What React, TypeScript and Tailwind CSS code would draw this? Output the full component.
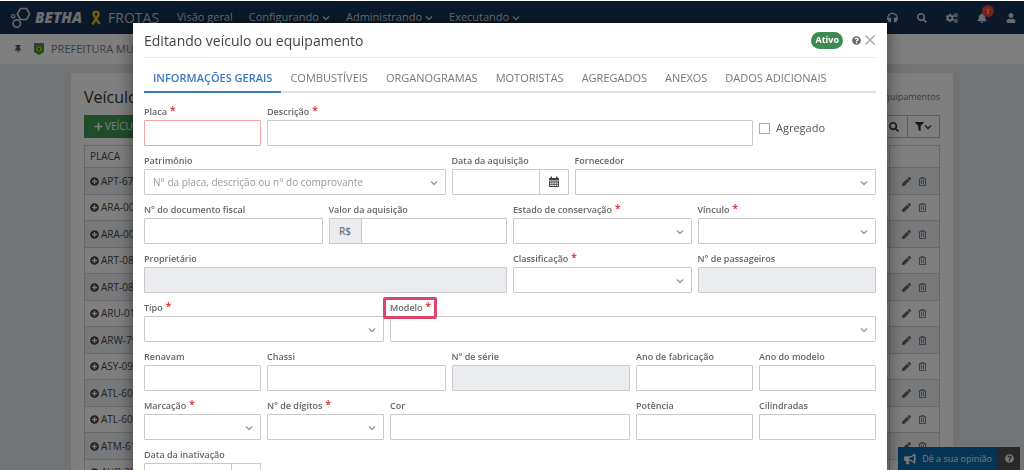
import React, { useState } from 'react';

import {
  FaBell,
  FaBullhorn,
  FaCogs,
  FaFilter,
  FaHeadphones,
  FaPen,
  FaPlus,
  FaPlusCircle,
  FaQuestionCircle,
  FaRegTrashAlt,
  FaSearch,
  FaThumbtack,
  FaUser
} from 'react-icons/fa';

import { clsx } from 'clsx';


const MENU = ['Configurando', 'Administrando', 'Executando'];

const PLATES = [
  'APT-67', 'ARA-00', 'ARA-00', 'ART-08', 'ART-08', 'ARU-01',
  'ARW-79', 'ASY-09', 'ATL-60', 'ATL-60', 'ATM-61', 'AUB-38',
];

const TABS = [
  'INFORMAÇÕES GERAIS', 'COMBUSTÍVEIS', 'ORGANOGRAMAS', 'MOTORISTAS',
  'AGREGADOS', 'ANEXOS', 'DADOS ADICIONAIS',
];

type FieldProps = {
  id: string;
  label: string;
  span: string;
  type?: 'text' | 'select' | 'date' | 'money';
  required?: boolean;
  disabled?: boolean;
  invalid?: boolean;
  highlight?: boolean;
  placeholder?: string;
};

const FIELDS: FieldProps[] = [
  { id: 'patrimonio', label: 'Patrimônio', span: 'col-span-5', type: 'select', placeholder: 'N° da placa, descrição ou n° do comprovante' },
  { id: 'aquisicao', label: 'Data da aquisição', span: 'col-span-2', type: 'date' },
  { id: 'fornecedor', label: 'Fornecedor', span: 'col-span-5', type: 'select' },
  { id: 'documento', label: 'N° do documento fiscal', span: 'col-span-3' },
  { id: 'valor', label: 'Valor da aquisição', span: 'col-span-3', type: 'money' },
  { id: 'estado', label: 'Estado de conservação', span: 'col-span-3', type: 'select', required: true },
  { id: 'vinculo', label: 'Vínculo', span: 'col-span-3', type: 'select', required: true },
  { id: 'proprietario', label: 'Proprietário', span: 'col-span-6', disabled: true },
  { id: 'classificacao', label: 'Classificação', span: 'col-span-3', type: 'select', required: true },
  { id: 'passageiros', label: 'N° de passageiros', span: 'col-span-3', disabled: true },
  { id: 'tipo', label: 'Tipo', span: 'col-span-4', type: 'select', required: true },
  { id: 'modelo', label: 'Modelo', span: 'col-span-8', type: 'select', required: true, highlight: true },
  { id: 'renavam', label: 'Renavam', span: 'col-span-2' },
  { id: 'chassi', label: 'Chassi', span: 'col-span-3' },
  { id: 'serie', label: 'N° de série', span: 'col-span-3', disabled: true },
  { id: 'fabricacao', label: 'Ano de fabricação', span: 'col-span-2' },
  { id: 'anoModelo', label: 'Ano do modelo', span: 'col-span-2' },
  { id: 'marcacao', label: 'Marcação', span: 'col-span-2', type: 'select', required: true },
  { id: 'digitos', label: 'N° de dígitos', span: 'col-span-2', type: 'select', required: true },
  { id: 'cor', label: 'Cor', span: 'col-span-4' },
  { id: 'potencia', label: 'Potência', span: 'col-span-2' },
  { id: 'cilindradas', label: 'Cilindradas', span: 'col-span-2' },
  { id: 'inativacao', label: 'Data da inativação', span: 'col-span-2', type: 'date' },
];

function Chevron({ className }: { className?: string }) {
  return (
    <svg viewBox="0 0 8 8" className={clsx('h-2 w-2', className)} fill="none" stroke="currentColor" strokeWidth="1.4">
      <path d="M1 2.600l3 3 3-3" />
    </svg>
  );
}

function CalendarIcon() {
  return (
    <svg viewBox="0 0 12 12" className="h-3 w-3" fill="#444">
      <path d="M1 2h1.500V.5h1.500V2h4V.5h1.500V2H11v2H1z" />
      <path fillRule="evenodd" d="M1 4.500h10V11H1zM2 5.500v1h1.600v-1zm2.200 0v1h1.600v-1zm2.200 0v1H8v-1zm2.200 0v1H10v-1zM2 7.200v1h1.600v-1zm2.200 0v1h1.600v-1zm2.200 0v1H8v-1zm2.200 0v1H10v-1zM2 9v1h1.600V9zm2.200 0v1h1.600V9zm2.200 0v1H8V9zm2.200 0v1H10V9z" />
    </svg>
  );
}

function Field({ id, label, span, type = 'text', required, disabled, invalid, highlight, placeholder }: FieldProps) {
  const box = clsx(
    'block h-[26px] w-full min-w-0 rounded-[1px] border px-2 text-[10px] outline-none',
    invalid ? 'border-[#f2a3a3]' : 'border-[#c9c9c9]',
    disabled ? 'bg-[#eaecf0]' : 'bg-white'
  );

  return (
    <div className={clsx('min-w-0', span)}>
      <div className="mb-px flex h-[14px]">
        <label htmlFor={id} className="relative flex gap-[3px] text-[9px] leading-[14px] font-semibold whitespace-nowrap text-[#666]">
          {label}
          {required && <span className="text-[10px] leading-[10px] font-bold text-[#e04040]">*</span>}
          {highlight && <span className="absolute -top-1 -right-[6px] -bottom-1 -left-[7px] z-10 rounded-[2px] border-[3px] border-[#dd4668]" />}
        </label>
      </div>
      {type === 'text' && <input id={id} type="text" disabled={disabled} className={box} />}
      {type === 'select' && (
        <div className="relative">
          <select id={id} defaultValue="" className={clsx(box, 'appearance-none text-[#999]')}>
            <option value="">{placeholder}</option>
          </select>
          <Chevron className="pointer-events-none absolute top-[10px] right-2 text-[#999]" />
        </div>
      )}
      {type === 'date' && (
        <div className="flex">
          <input id={id} type="text" className={box} />
          <button type="button" aria-label={label} className="-ml-px flex h-[26px] w-[30px] shrink-0 items-center justify-center border border-[#c9c9c9] bg-white">
            <CalendarIcon />
          </button>
        </div>
      )}
      {type === 'money' && (
        <div className="flex">
          <span className="-mr-px flex h-[26px] w-[33px] shrink-0 items-center justify-center border border-[#c9c9c9] bg-[#eaecf0] text-[10px] font-semibold text-[#777]">R$</span>
          <input id={id} type="text" className={box} />
        </div>
      )}
    </div>
  );
}

function Navbar() {
  return (
    <nav className="flex h-[33px] items-center bg-[#143152] pr-2 pl-[10px] text-[#d2d6dc]">
      <svg viewBox="0 0 22 24" className="h-6 w-[22px] shrink-0" fill="none" stroke="currentColor" strokeWidth="1.5">
        <path d="M10.500 2.500h6l3.200 5.500-3.200 5.500h-6L7.300 8z" strokeLinejoin="round" />
        <circle cx="6.800" cy="17.500" r="3.700" />
        <circle cx="3.200" cy="10.200" r="1.700" strokeWidth="1.200" />
      </svg>
      <span className="ml-[3px] text-[15px] font-extrabold italic">BETHA</span>
      <svg viewBox="0 0 10 16" className="ml-[9px] h-4 w-[10px]" fill="none" stroke="#e6bc1c" strokeWidth="2.400">
        <path d="M1.500 14.500C3 11 8 6.500 7.600 3.600 7.300 1 2.900 1 2.600 3.600 2.300 6.500 6.500 11 8.700 14" />
      </svg>
      <span className="ml-[7px] text-[14px] text-[#c6cbd2]">FROTAS</span>
      <div className="ml-[18px] flex items-center gap-4 text-[11px]">
        <a href="#geral">Visão geral</a>
        {MENU.map(item => (
          <button key={item} type="button" className="flex items-center gap-[3px]">
            {item} <Chevron />
          </button>
        ))}
      </div>
      <div className="ml-auto flex items-center gap-[19px] text-[10px]">
        <button type="button" aria-label="Suporte"><FaHeadphones className="text-[11px]" /></button>
        <button type="button" aria-label="Pesquisar"><FaSearch /></button>
        <button type="button" aria-label="Configurações"><FaCogs className="text-[12px]" /></button>
        <button type="button" aria-label="Notificações" className="relative">
          <FaBell />
          <span className="absolute -top-2 left-[5px] flex h-3 w-3 items-center justify-center rounded-full bg-[#f04437] text-[8px] text-white">1</span>
        </button>
        <button type="button" aria-label="Usuário"><FaUser /></button>
      </div>
    </nav>
  );
}

function VehicleList() {
  return (
    <main className="mx-auto mt-[9px] max-w-[882px] bg-white px-[13px] pt-3">
      <header className="flex h-6 items-center justify-between">
        <h1 className="text-[16px] text-[#333]">Veículos e equipamentos</h1>
        <span className="text-[9px] text-[#777]">Veículos e equipamentos</span>
      </header>
      <div className="mt-[6px] flex justify-between">
        <button type="button" className="flex h-[23px] items-center gap-[2px] bg-[#3f9a56] px-[10px] text-[10px] text-white">
          <FaPlus className="text-[9px]" /> VEÍCULO
        </button>
        <div className="flex text-[#333]">
          <button type="button" aria-label="Buscar" className="flex h-[23px] w-7 items-center justify-center border border-[#bbb] text-[10px]"><FaSearch /></button>
          <button type="button" aria-label="Filtrar" className="-ml-px flex h-[23px] w-[33px] items-center justify-center border border-[#bbb] text-[9px]">
            <FaFilter /><Chevron />
          </button>
        </div>
      </div>
      <table className="mt-[7px] w-full border-collapse text-left text-[10px] text-[#444]">
        <thead>
          <tr className="h-[22px]">
            <th className="border border-[#d0d0d0] px-[5px] font-normal">PLACA</th>
            <th className="w-[50px] border border-[#d0d0d0]" />
          </tr>
        </thead>
        <tbody>
          {PLATES.map((plate, i) => (
            <tr key={i} className="h-[26px] odd:h-[27px] odd:bg-[#f0f2f5]">
              <td className="border border-[#d0d0d0] px-[5px]">
                <span className="flex items-center gap-[2px]"><FaPlusCircle className="text-[9px]" />{plate}</span>
              </td>
              <td className="border border-[#d0d0d0]">
                <span className="flex justify-end gap-[7px] pr-3 text-[9px] text-[#666]">
                  <button type="button" aria-label="Editar"><FaPen /></button>
                  <button type="button" aria-label="Excluir"><FaRegTrashAlt /></button>
                </span>
              </td>
            </tr>
          ))}
        </tbody>
      </table>
    </main>
  );
}

function VehicleModal() {
  const [tab, setTab] = useState(TABS[0]);

  return (
    <div role="dialog" aria-label="Editando veículo ou equipamento" className="mx-auto max-w-[754px] bg-white px-[11px] pb-6 text-[#444] shadow-[0_4px_16px_rgba(0,0,0,0.5)]">
      <header className="flex h-[35px] items-center border-b border-[#eee]">
        <h2 className="text-[14px] text-[#444]">Editando veículo ou equipamento</h2>
        <span className="mr-[9px] ml-auto flex h-[17px] items-center rounded-full bg-[#3d8b50] px-1 text-[9px] font-bold text-white">Ativo</span>
        <button type="button" aria-label="Ajuda" className="text-[9px] text-[#666]"><FaQuestionCircle /></button>
        <button type="button" aria-label="Fechar" className="mr-px ml-1">
          <svg viewBox="0 0 10 10" className="h-[10px] w-[10px]" stroke="#aaa" strokeWidth="1.500"><path d="M.5.500l9 9M9.500.500l-9 9" /></svg>
        </button>
      </header>
      <div role="tablist" className="flex h-[35px] items-end border-b-2 border-[#e3e3e6]">
        {TABS.map(name => (
          <button
            key={name}
            type="button"
            role="tab"
            aria-selected={name === tab}
            onClick={() => setTab(name)}
            className={clsx(
              '-mb-[2px] flex h-[27px] items-center border-b-2 px-[9px] text-[11px] whitespace-nowrap',
              name === tab ? 'border-[#3b78c3] font-semibold text-[#3b78c3]' : 'border-transparent text-[#777]'
            )}
          >
            {name}
          </button>
        ))}
      </div>
      <form className="grid grid-cols-12 gap-x-[6px] gap-y-2 pt-3">
        <Field id="placa" label="Placa" span="col-span-2" required invalid />
        <Field id="descricao" label="Descrição" span="col-span-8" required />
        <label className="col-span-2 flex items-center gap-[6px] pt-[5px] text-[11px] text-[#555]">
          <input type="checkbox" className="h-[11px] w-[11px] appearance-none border border-[#aaa] bg-white" />
          Agregado
        </label>
        {FIELDS.map(field => <Field key={field.id} {...field} />)}
      </form>
    </div>
  );
}

export default function App() {
  return (
    <div className="h-screen overflow-hidden border-t border-white bg-[#e4e6ea] font-['Open_Sans',sans-serif]">
      <Navbar />
      <div className="flex h-[30px] items-center bg-white pl-[14px] text-[11px] text-[#777]">
        <FaThumbtack className="text-[8px] text-[#555]" />
        <svg viewBox="0 0 12 14" className="mr-[6px] ml-[11px] h-[14px] w-3">
          <path d="M1 1h10v9l-5 3-5-3z" fill="#3a9a32" />
          <path d="M1 1h10v3H1z" fill="#96705a" />
          <circle cx="6" cy="7" r="2.500" fill="#d8c522" />
          <circle cx="6" cy="7" r="1.200" fill="#247a30" />
        </svg>
        PREFEITURA MUNICIPAL
      </div>
      <VehicleList />
      <div className="fixed right-1 bottom-0 flex h-[23px] text-[9px] text-[#eee]">
        <button type="button" className="flex items-center gap-[6px] bg-[#0a68ac] px-[6px]">
          <FaBullhorn className="text-[12px]" /> Dê a sua opinião
        </button>
        <button type="button" aria-label="Ajuda" className="flex w-[22px] items-center justify-center bg-[#505050]"><FaQuestionCircle /></button>
      </div>
      <div className="fixed inset-x-0 top-px bottom-0 overflow-hidden bg-black/50 pt-[22px] pr-1">
        <VehicleModal />
      </div>
    </div>
  );
}
